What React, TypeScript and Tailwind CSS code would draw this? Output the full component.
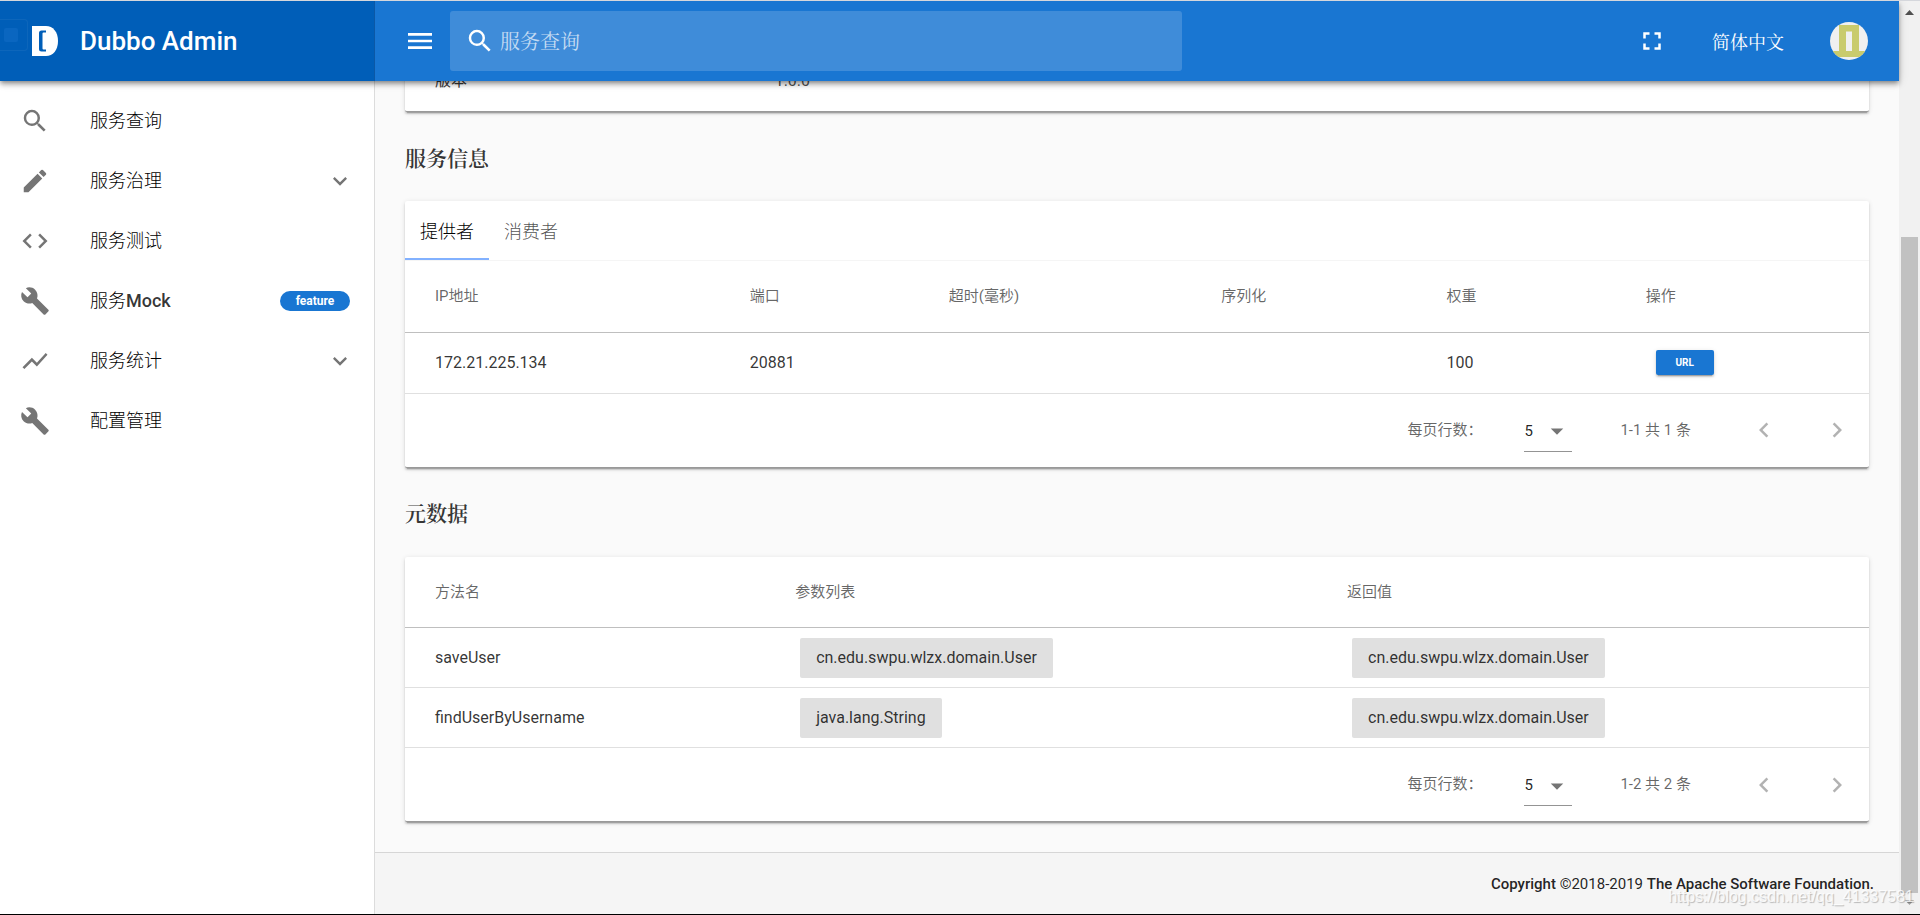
import type { ReactNode } from 'react';
import type { IconType } from 'react-icons';
import {
  MdArrowDropDown,
  MdBuild,
  MdChevronLeft,
  MdChevronRight,
  MdCode,
  MdEdit,
  MdExpandMore,
  MdFullscreen,
  MdMenu,
  MdSearch,
  MdShowChart,
} from 'react-icons/md';

type NavItem = {
  icon: IconType;
  title: string;
  badge?: string;
  group?: boolean;
};

const NAV: NavItem[] = [
  { icon: MdSearch, title: '服务查询' },
  { icon: MdEdit, title: '服务治理', group: true },
  { icon: MdCode, title: '服务测试' },
  { icon: MdBuild, title: '服务Mock', badge: 'feature' },
  { icon: MdShowChart, title: '服务统计', group: true },
  { icon: MdBuild, title: '配置管理' },
];

const PROVIDERS = [
  { ip: '172.21.225.134', port: '20881', timeout: '', serial: '', weight: '100' },
];

const METHODS = [
  {
    name: 'saveUser',
    params: ['cn.edu.swpu.wlzx.domain.User'],
    result: 'cn.edu.swpu.wlzx.domain.User',
  },
  {
    name: 'findUserByUsername',
    params: ['java.lang.String'],
    result: 'cn.edu.swpu.wlzx.domain.User',
  },
];

const CARD_SHADOW =
  'shadow-[0_3px_1px_-2px_rgba(0,0,0,0.2),0_2px_2px_0_rgba(0,0,0,0.14),0_1px_5px_0_rgba(0,0,0,0.12)]';

const SERIF = "font-['Noto_Serif_CJK_SC','Noto_Sans_CJK_SC',serif]";

export default function App() {
  return (
    <div className="flex h-screen flex-col overflow-hidden border-t border-b border-t-[#d5d7dc] border-b-black bg-[#fafafa] font-[Roboto,'Noto_Sans_CJK_SC',sans-serif] text-base text-black/80">
      <div className="flex min-h-0 flex-1">
        <div className="flex min-w-0 flex-1 flex-col">
          <TopBar />
          <div className="flex min-h-0 flex-1">
            <Sidebar />
            <Content />
          </div>
        </div>
        <ScrollTrack />
      </div>
      <span className="pointer-events-none absolute right-1.5 bottom-2 font-['Liberation_Sans',sans-serif] text-base leading-5 text-white/80 [text-shadow:1px_1px_1px_rgba(0,0,0,0.25)]">
        https://blog.csdn.net/qq_41337581
      </span>
    </div>
  );
}

function TopBar() {
  return (
    <header className="relative z-10 flex h-20 shrink-0 bg-[#1976d2] text-white shadow-[0_2px_4px_-1px_rgba(0,0,0,0.3),0_4px_5px_0_rgba(0,0,0,0.2),0_1px_10px_0_rgba(0,0,0,0.14)]">
      <div className="relative flex w-[375px] shrink-0 items-center border-r border-[#0b58a6] bg-[#005eb8] pl-8">
        <span className="absolute top-[18px] left-0 flex h-8 w-7 items-center rounded-r-sm border border-l-0 border-white/5 pl-1">
          <span className="h-3.5 w-3.5 rounded-xs bg-[#0a66c0]" />
        </span>
        <DubboLogo />
        <span className="ml-[22px] text-[26px] leading-8 font-medium">Dubbo Admin</span>
      </div>

      <div className="flex flex-1 items-center pr-[31px] pl-[29px]">
        <button type="button" aria-label="Menu" className="shrink-0">
          <MdMenu size={32} />
        </button>
        <label className="ml-3.5 flex h-[60px] w-1/2 items-center rounded-[3px] bg-[#3f8cd9] pl-[15px]">
          <MdSearch size={30} className="shrink-0" />
          <input
            type="text"
            aria-label="服务查询"
            placeholder="服务查询"
            className={`ml-[5px] w-full bg-transparent text-xl outline-none placeholder:text-white/70 ${SERIF}`}
          />
        </label>
        <div className="ml-auto flex items-center">
          <button type="button" aria-label="Fullscreen">
            <MdFullscreen size={30} />
          </button>
          <button type="button" className={`ml-[45px] text-lg leading-6 ${SERIF}`}>
            简体中文
          </button>
          <button type="button" aria-label="Account" className="ml-[46px]">
            <Avatar />
          </button>
        </div>
      </div>
    </header>
  );
}

function DubboLogo() {
  return (
    <svg width="26" height="30" viewBox="0 0 26 30" aria-hidden="true">
      <path fill="#fff" d="M0 0h14c7 0 12 6 12 15s-5 15-12 15H0z" />
      <path
        fill="#005eb8"
        d="M9.500 4.500H14v2h-2.500a1 1 0 0 0-1 1v15a1 1 0 0 0 1 1H14v2H9.500A2.500 2.500 0 0 1 7 23V7a2.500 2.500 0 0 1 2.500-2.500z"
      />
    </svg>
  );
}

function Avatar() {
  return (
    <svg width="38" height="38" viewBox="0 0 38 38" className="rounded-full" aria-hidden="true">
      <rect width="38" height="38" fill="#f0f0f0" />
      <path fill="#c9cb6d" d="M9 3h20v26h9v6H0v-6h9z" />
      <rect x="16" y="9.500" width="6" height="19.500" fill="#f0f0f0" />
    </svg>
  );
}

function Sidebar() {
  return (
    <nav className="w-[375px] shrink-0 border-r border-[#dcdcdc] bg-white pt-2.5">
      <ul>
        {NAV.map(({ icon: Icon, title, badge, group }) => (
          <li key={title}>
            <a href="#" className="flex h-[60px] items-center pr-5 pl-5">
              <Icon size={30} className="shrink-0 text-[#757575]" />
              <span className="ml-10 flex-1 text-lg leading-6">
                <NavTitle title={title} />
              </span>
              {badge && (
                <span className="mr-1 flex h-5 w-[70px] items-center justify-center rounded-full bg-[#1976d2] text-xs font-bold text-white">
                  {badge}
                </span>
              )}
              {group && <MdExpandMore size={28} className="text-[#757575]" />}
            </a>
          </li>
        ))}
      </ul>
    </nav>
  );
}

// Latin part of a title is set in medium, the Chinese part stays light
function NavTitle({ title }: { title: string }) {
  const latin = title.match(/[A-Za-z]+$/)?.[0] ?? '';
  return (
    <>
      <span className="font-light text-black">{title.slice(0, title.length - latin.length)}</span>
      {latin && <span className="font-medium">{latin}</span>}
    </>
  );
}

// The page is scrolled to its end, so the content is aligned to the bottom
function Content() {
  return (
    <div className="flex min-w-0 flex-1 flex-col justify-end overflow-hidden">
      <main className="px-[30px] pb-[30px]">
        <Card>
          <table className="w-full table-fixed text-left">
            <tbody>
              <tr className="h-[60px]">
                <th scope="row" className="w-[23.200%] pl-[30px] font-normal">
                  版本
                </th>
                <td className="pl-[30px] text-black/70">1.0.0</td>
              </tr>
            </tbody>
          </table>
        </Card>

        <SectionTitle>服务信息</SectionTitle>
        <Card>
          <div role="tablist" className="flex h-[60px] border-b border-[#f5f5f5] text-lg">
            <button
              type="button"
              role="tab"
              aria-selected="true"
              className="border-b-2 border-[#82b1ff] px-[15px] pt-1 font-light text-black"
            >
              提供者
            </button>
            <button
              type="button"
              role="tab"
              aria-selected="false"
              className="border-b-2 border-transparent px-[15px] pt-1 font-light text-black/70"
            >
              消费者
            </button>
          </div>
          <table className="w-full table-fixed text-left">
            <thead>
              <tr className="h-[71px] border-b border-black/25 text-[15px] text-black/60">
                <HeadCell className="w-[21.500%]">IP地址</HeadCell>
                <HeadCell className="w-[13.600%]">端口</HeadCell>
                <HeadCell className="w-[18.600%]">超时(毫秒)</HeadCell>
                <HeadCell className="w-[15.400%]">序列化</HeadCell>
                <HeadCell className="w-[13.600%]">权重</HeadCell>
                <HeadCell>操作</HeadCell>
              </tr>
            </thead>
            <tbody>
              {PROVIDERS.map((p) => (
                <tr key={p.ip} className="h-[61px] border-b border-black/12">
                  <td className="pl-[30px]">{p.ip}</td>
                  <td className="pl-[30px]">{p.port}</td>
                  <td className="pl-[30px]">{p.timeout}</td>
                  <td className="pl-[30px]">{p.serial}</td>
                  <td className="pl-[30px]">{p.weight}</td>
                  <td className="pl-10">
                    <button
                      type="button"
                      className="flex h-[25px] w-[58px] items-center justify-center rounded-xs bg-[#1976d2] text-[10px] font-bold text-white shadow-[0_3px_1px_-2px_rgba(0,0,0,0.2),0_2px_2px_0_rgba(0,0,0,0.14),0_1px_5px_0_rgba(0,0,0,0.12)]"
                    >
                      URL
                    </button>
                  </td>
                </tr>
              ))}
            </tbody>
          </table>
          <Pagination id="provider-rows" range="1-1 共 1 条" />
        </Card>

        <SectionTitle>元数据</SectionTitle>
        <Card>
          <table className="w-full table-fixed text-left">
            <thead>
              <tr className="h-[71px] border-b border-black/25 text-[15px] text-black/60">
                <HeadCell className="w-[24.600%]">方法名</HeadCell>
                <HeadCell className="w-[37.700%]">参数列表</HeadCell>
                <HeadCell>返回值</HeadCell>
              </tr>
            </thead>
            <tbody>
              {METHODS.map((m) => (
                <tr key={m.name} className="h-[60px] border-b border-black/12">
                  <td className="pl-[30px]">{m.name}</td>
                  <td className="pl-[35px]">
                    {m.params.map((param) => (
                      <Chip key={param}>{param}</Chip>
                    ))}
                  </td>
                  <td className="pl-[35px]">
                    <Chip>{m.result}</Chip>
                  </td>
                </tr>
              ))}
            </tbody>
          </table>
          <Pagination id="method-rows" range="1-2 共 2 条" />
        </Card>
      </main>

      <footer className="flex h-[62px] shrink-0 items-center justify-end border-t border-[#d6d6d6] bg-[#f5f5f5] pt-0.5 pr-[25px] text-[15px] text-black/87">
        <p>
          <span className="font-medium">Copyright</span> ©2018-2019{' '}
          <span className="font-medium">The Apache Software Foundation.</span>
        </p>
      </footer>
    </div>
  );
}

function Card({ children }: { children: ReactNode }) {
  return (
    <section className={`rounded-xs border-b border-black/40 bg-white ${CARD_SHADOW}`}>
      {children}
    </section>
  );
}

function SectionTitle({ children }: { children: ReactNode }) {
  return (
    <h3 className={`flex h-[89px] items-center text-[21px] leading-7 font-semibold ${SERIF}`}>
      {children}
    </h3>
  );
}

function HeadCell({ children, className = '' }: { children: ReactNode; className?: string }) {
  return (
    <th scope="col" className={`pl-[30px] font-normal ${className}`}>
      {children}
    </th>
  );
}

function Chip({ children }: { children: ReactNode }) {
  return (
    <span className="inline-flex h-10 items-center rounded-xs bg-[#e0e0e0] px-4 align-middle">
      {children}
    </span>
  );
}

function Pagination({ id, range }: { id: string; range: string }) {
  return (
    <div className="flex h-[73px] items-center justify-end pr-[17px] text-[15px] text-black/60">
      <label htmlFor={id}>每页行数：</label>
      <div className="relative mb-[15px] ml-[42px] flex h-10 w-12 items-center self-end border-b border-black/42">
        <select
          id={id}
          defaultValue="5"
          className="h-full w-full appearance-none bg-transparent text-black/87 outline-none"
        >
          <option>5</option>
          <option>10</option>
          <option>25</option>
        </select>
        <MdArrowDropDown size={30} className="pointer-events-none absolute right-0 text-[#757575]" />
      </div>
      <span className="ml-12">{range}</span>
      <button type="button" aria-label="Previous page" disabled className="ml-[58px] text-black/30">
        <MdChevronLeft size={30} />
      </button>
      <button type="button" aria-label="Next page" disabled className="ml-[43px] text-black/30">
        <MdChevronRight size={30} />
      </button>
    </div>
  );
}

function ScrollTrack() {
  return (
    <div className="flex w-[21px] shrink-0 flex-col items-center bg-[#f1f1f1]" aria-hidden="true">
      <svg width="21" height="21" viewBox="0 0 21 21">
        <path fill="#505050" d="M6 14l4.500-5 4.500 5z" />
      </svg>
      <div className="flex w-[17px] flex-1 flex-col">
        <div className="flex-[215]" />
        <div className="flex-[656] bg-[#c1c1c1]" />
      </div>
      <svg width="21" height="21" viewBox="0 0 21 21">
        <path fill="#a0a0a0" d="M6 7l4.500 5 4.500-5z" />
      </svg>
    </div>
  );
}
